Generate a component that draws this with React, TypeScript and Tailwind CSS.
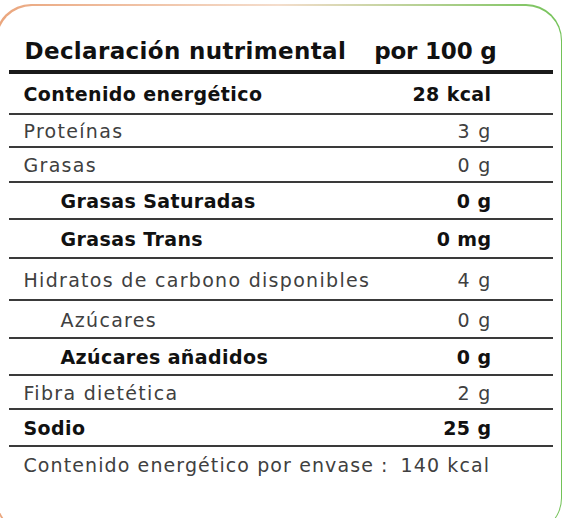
import React from "react";

type Row = {
  label: string;
  value: string;
  bold?: boolean;
  indent?: boolean;
  h: string;
};

const rows: Row[] = [
  { label: "Contenido energético", value: "28 kcal", bold: true, h: "h-[41px]" },
  { label: "Proteínas", value: "3 g", h: "h-[33px]" },
  { label: "Grasas", value: "0 g", h: "h-[35px]" },
  { label: "Grasas Saturadas", value: "0 g", bold: true, indent: true, h: "h-[37px]" },
  { label: "Grasas Trans", value: "0 mg", bold: true, indent: true, h: "h-[39px]" },
  { label: "Hidratos de carbono disponibles", value: "4 g", h: "h-[42px]" },
  { label: "Azúcares", value: "0 g", indent: true, h: "h-[38px]" },
  { label: "Azúcares añadidos", value: "0 g", bold: true, indent: true, h: "h-[37px]" },
  { label: "Fibra dietética", value: "2 g", h: "h-[34px]" },
  { label: "Sodio", value: "25 g", bold: true, h: "h-[37px]" },
];

function App() {
  return (
    <div className="w-[565px] h-[518px] bg-white overflow-hidden font-['DejaVu_Sans',sans-serif]">
      <div className="h-[530px] rounded-[36px] bg-gradient-to-r from-[#eaa57c] via-[#f4ddcc] to-[#72c257] p-[1.5px] -ml-[5px] mr-[3px] mt-[4px]">
        <div className="h-full rounded-[35px] bg-white pl-[12px] pr-[8px]">
          <div className="flex items-end justify-between h-[68px] border-b-4 border-[#1a1a1a] pl-[16px] pr-[56px] pb-[1px]">
            <span className="text-[23px] font-bold text-[#111] tracking-[0.35px]">Declaración nutrimental</span>
            <span className="text-[23px] font-bold text-[#111] tracking-[-0.2px]">por 100 g</span>
          </div>
          {rows.map((r) => (
            <div
              key={r.label}
              className={`flex items-center justify-between border-b-2 border-[#3a3a3a] pt-[3px] pr-[61px] ${r.h} ${
                r.indent ? "pl-[52px]" : "pl-[15px]"
              } ${r.bold ? "font-bold text-[#111] tracking-[0.4px]" : "font-normal text-[#404040] tracking-[1.3px]"}`}
            >
              <span className="text-[19px]">{r.label}</span>
              <span className="text-[19px]">{r.value}</span>
            </div>
          ))}
          <div className="flex items-center h-[38px] pl-[15px] text-[19px] text-[#404040] tracking-[1.1px]">
            <span>Contenido energético por envase :</span>
            <span className="ml-[12px]">140 kcal</span>
          </div>
        </div>
      </div>
    </div>
  );
}

export default App;
